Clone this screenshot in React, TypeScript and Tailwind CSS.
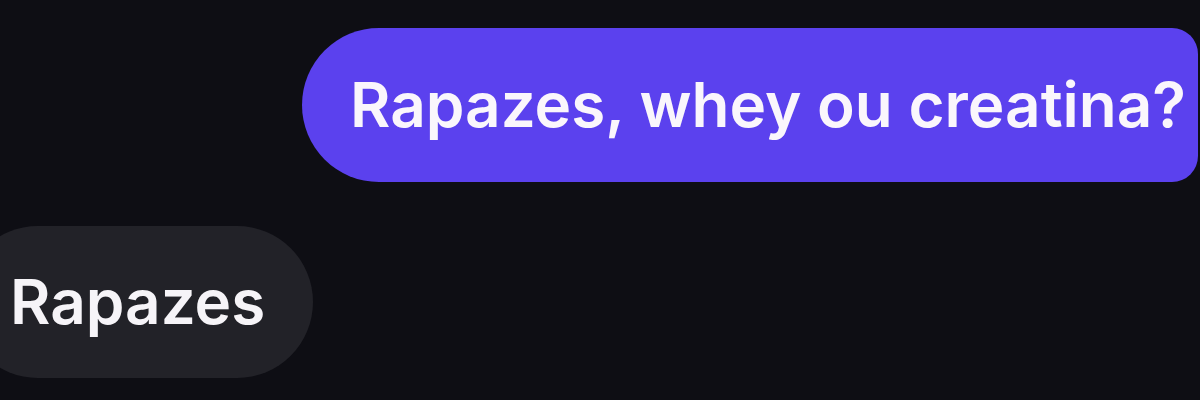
export default function App() {
  return (
    <div
      className="w-[1200px] h-[400px] overflow-hidden bg-[#0e0e14] flex flex-col pt-[28px] gap-[44px]"
      style={{ fontFamily: "Inter, 'Noto Sans', sans-serif" }}
    >
      <div className="self-end mr-[2px] h-[154px] flex items-center pl-[48px] pr-[12px] bg-[#5b41ee] rounded-l-[77px] rounded-r-[26px]">
        <span className="text-[62px] font-semibold text-[#faf6fc] leading-none whitespace-nowrap">
          Rapazes, whey ou creatina?
        </span>
      </div>
      <div className="self-start -ml-[38px] h-[152px] flex items-center px-[48px] bg-[#222228] rounded-[76px]">
        <span className="text-[62px] font-semibold text-[#f6f4f8] leading-none whitespace-nowrap">
          Rapazes
        </span>
      </div>
    </div>
  );
}
